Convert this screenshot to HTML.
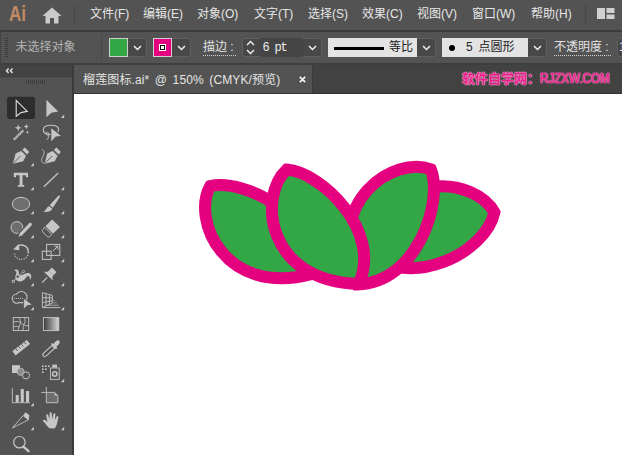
<!DOCTYPE html>
<html lang="zh-CN">
<head>
<meta charset="utf-8">
<title>榴莲图标.ai</title>
<style>
*{margin:0;padding:0;box-sizing:border-box}
html,body{width:622px;height:455px;overflow:hidden;background:#535353}
body{position:relative;font-family:"Liberation Sans","Noto Sans CJK SC",sans-serif;font-size:12px;color:#dcdcdc}
.abs{position:absolute}
#menubar{left:0;top:0;width:622px;height:30px;background:#535353}
#menubar .mi{position:absolute;top:5.4px;height:18px;line-height:18px;font-size:12px;color:#e6e6e6;white-space:nowrap}
#ctrl{left:0;top:30px;width:622px;height:35px;background:#535353;border-top:2px solid #3c3c3c;border-bottom:2px solid #3e3e3e}
#tabbar{left:73px;top:65px;width:549px;height:29px;background:#424242}
#tab{left:0;top:0;width:240px;height:28px;background:#535353}
#tools{left:0;top:65px;width:73.5px;height:390px;background:#535353;border-right:2px solid #3a3a3a}
#canvas{left:74px;top:94px;width:548px;height:361px;background:#fff}
.lbl{position:absolute;white-space:nowrap;line-height:16px;height:16px}

.dd{width:19px;height:19px;background:#484848;border:1px solid #5f5f5f;border-left:none;border-radius:0 3px 3px 0}
.spin{width:18px;height:19px;background:#484848;border:1px solid #5f5f5f;border-right:none;border-radius:3px 0 0 3px}
.inp{height:19px;background:#454545}
.lite{height:19px;background:#e3e3e3}
.ul{border-bottom:1px dotted #d0d0d0;height:16.4px}
.mono{font-family:"Liberation Mono",monospace;font-size:12px;letter-spacing:-1.2px;color:#eee}
.grip{background:repeating-linear-gradient(to bottom,#3c3c3c 0,#3c3c3c 1px,transparent 1px,transparent 2px)}
</style>
</head>
<body>
<div id="menubar" class="abs">
  <div class="abs" style="left:9px;top:0.5px;font-size:22.5px;font-weight:bold;color:#c28b66;line-height:26px;transform:scaleX(0.76);transform-origin:0 50%">Ai</div>
  <svg class="abs" style="left:42px;top:7px" width="20" height="17" viewBox="0 0 20 17"><path d="M10 0.5 L0.5 9 H3.5 V16.5 H8 V11 H12 V16.5 H16.5 V9 H19.5 Z" fill="#cbcbcb"/></svg>
  <div class="abs" style="left:73.5px;top:5px;width:1px;height:20px;background:#474747"></div>
  <div class="mi" style="left:90px">文件(F)</div>
  <div class="mi" style="left:143px">编辑(E)</div>
  <div class="mi" style="left:197px">对象(O)</div>
  <div class="mi" style="left:254px">文字(T)</div>
  <div class="mi" style="left:308px">选择(S)</div>
  <div class="mi" style="left:362px">效果(C)</div>
  <div class="mi" style="left:417px">视图(V)</div>
  <div class="mi" style="left:472px">窗口(W)</div>
  <div class="mi" style="left:531px">帮助(H)</div>
  <div class="abs" style="left:585px;top:5px;width:1px;height:20px;background:#474747"></div>
  <svg class="abs" style="left:597px;top:8px" width="18" height="12" viewBox="0 0 18 12"><rect x="0" y="0" width="8" height="11" fill="#d0d0d0"/><rect x="9.5" y="0" width="8" height="5" fill="#d0d0d0"/><rect x="9.5" y="6.5" width="8" height="4.5" fill="#d0d0d0"/></svg>
</div>

<div id="ctrl" class="abs"></div>
<div id="ctrlitems" class="abs" style="left:0;top:32px;width:622px;height:31px;overflow:hidden">
  <div class="abs grip" style="left:5px;top:6px;width:3px;height:19px"></div>
  <div class="lbl" style="left:15.5px;top:6.5px;color:#b4b4b4">未选择对象</div>
  <div class="abs" style="left:101px;top:3px;width:1px;height:25px;background:#484848"></div>
  <div class="abs" style="left:109px;top:6px;width:19px;height:19px;background:#33a646;border:1px solid #cfcfcf"></div>
  <div class="abs dd" style="left:128px;top:6px"></div><svg class="abs" style="left:133px;top:13px" width="9" height="6" viewBox="0 0 9 6"><path d="M1 1 L4.5 4.5 L8 1" fill="none" stroke="#f0f0f0" stroke-width="1.5"/></svg>
  <div class="abs" style="left:153px;top:6px;width:19px;height:19px;background:#e4007f;border:1px solid #cfcfcf"></div>
  <div class="abs" style="left:159px;top:12px;width:7px;height:7px;background:#fff;border:1px solid #fff"><div style="width:5px;height:5px;background:#fff;border:1.5px solid #111"></div></div>
  <div class="abs dd" style="left:172px;top:6px"></div><svg class="abs" style="left:177px;top:13px" width="9" height="6" viewBox="0 0 9 6"><path d="M1 1 L4.5 4.5 L8 1" fill="none" stroke="#f0f0f0" stroke-width="1.5"/></svg>
  <div class="lbl ul" style="left:203px;top:7.3px;color:#e2e2e2;width:33px">描边 :</div>
  <div class="abs spin" style="left:241.5px;top:6px;width:18.5px"></div>
  <svg class="abs" style="left:246px;top:8px" width="9" height="15" viewBox="0 0 9 15"><path d="M1 5 L4.5 1.5 L8 5 M1 10 L4.5 13.5 L8 10" fill="none" stroke="#f0f0f0" stroke-width="1.4"/></svg>
  <div class="abs inp" style="left:260px;top:6px;width:44px"></div>
  <div class="lbl mono" style="left:262.5px;top:7.5px">6 pt</div>
  <div class="abs dd" style="left:303px;top:6px"></div><svg class="abs" style="left:308px;top:13px" width="9" height="6" viewBox="0 0 9 6"><path d="M1 1 L4.5 4.5 L8 1" fill="none" stroke="#f0f0f0" stroke-width="1.5"/></svg>
  <div class="abs lite" style="left:328px;top:6px;width:89px"></div>
  <div class="abs" style="left:334px;top:14.5px;width:50px;height:3.5px;background:#000"></div>
  <div class="lbl" style="left:389px;top:6.5px;color:#222">等比</div>
  <div class="abs dd" style="left:417px;top:6px"></div><svg class="abs" style="left:422px;top:13px" width="9" height="6" viewBox="0 0 9 6"><path d="M1 1 L4.5 4.5 L8 1" fill="none" stroke="#f0f0f0" stroke-width="1.5"/></svg>
  <div class="abs lite" style="left:442px;top:6px;width:86px"></div>
  <div class="abs" style="left:448.5px;top:12.5px;width:6px;height:6px;border-radius:50%;background:#000"></div>
  <div class="lbl" style="left:466px;top:6.5px;color:#222">5</div>
  <div class="lbl" style="left:478.5px;top:6.5px;color:#222">点圆形</div>
  <div class="abs dd" style="left:528px;top:6px"></div><svg class="abs" style="left:533px;top:13px" width="9" height="6" viewBox="0 0 9 6"><path d="M1 1 L4.5 4.5 L8 1" fill="none" stroke="#f0f0f0" stroke-width="1.5"/></svg>
  <div class="lbl ul" style="left:554px;top:7.3px;color:#e2e2e2;width:57px">不透明度 :</div>
  <div class="abs inp" style="left:617px;top:6px;width:10px;border-radius:3px 0 0 3px;border:1px solid #5e5e5e"></div>
  <div class="lbl" style="left:619px;top:6.5px;color:#eee">100%</div>
</div>

<div class="abs" style="left:0;top:31px;width:1px;height:424px;background:#434343"></div>
<div id="tabbar" class="abs">
  <div id="tab" class="abs">
    <div class="lbl" id="tabtxt" style="left:10px;top:7px;color:#e4e4e4;word-spacing:2px;letter-spacing:0.13px">榴莲图标.ai* @ 150% (CMYK/预览)</div>
    <svg class="abs" style="left:225.5px;top:11px" width="7" height="7" viewBox="0 0 7 7"><path d="M0.8 0.8 L6.2 6.2 M6.2 0.8 L0.8 6.2" stroke="#f2f2f2" stroke-width="1.7"/></svg>
  </div>
  <div class="abs" style="left:239px;top:0;width:1px;height:28px;background:#3c3c3c"></div>
  <div class="abs" style="left:0;top:28px;width:549px;height:1px;background:#333"></div>
  <div class="lbl" id="wm" style="left:389px;top:5px;color:#e6208a;font-weight:bold;font-size:13px;text-shadow:0 0 1.5px #ffa8d2,0 0 1px #ffb8da,0 0 1px #ffb8da">软件自学网：<span style="display:inline-block;font-size:14px;font-weight:normal;-webkit-text-stroke:0.45px #e6208a;transform:scaleX(0.83);transform-origin:0 50%;letter-spacing:0">RJZXW.COM</span></div>
</div>

<div id="tools" class="abs">
<svg class="abs" style="left:0;top:0" width="73" height="390" viewBox="0 65 73 390">
 <defs>
  <linearGradient id="gr" x1="0" x2="1" y1="0" y2="0"><stop offset="0" stop-color="#3a3a3a"/><stop offset="1" stop-color="#d8d8d8"/></linearGradient>
 </defs>
 <!-- header -->
 <rect x="0" y="64.5" width="72" height="12" fill="#434343"/>
 <rect x="0" y="76.3" width="72" height="1" fill="#3c3c3c"/>
 <path d="M8.6 68.5 L6.5 70.8 L8.6 73.1 M12.5 68.5 L10.4 70.8 L12.5 73.1" fill="none" stroke="#e0e0e0" stroke-width="1.5"/>
 <g stroke="#3e3e3e" stroke-width="1"><path d="M26.5 80.3V84M28.5 80.3V84M30.5 80.3V84M32.5 80.3V84M34.5 80.3V84M36.5 80.3V84M38.5 80.3V84M40.5 80.3V84M42.5 80.3V84M44.5 80.3V84"/></g>
 <!-- selected bg -->
 <rect x="7" y="96.8" width="28" height="22.2" rx="2.5" fill="#2d2d2d"/>
 <g fill="#c6c6c6">
  <!-- corner triangles -->
  <path d="M64.2 114.6V118H60.9Z"/>
  <path d="M33.9 162.8V166.2H30.6Z"/>
  <path d="M33.9 186.8V190.2H30.6Z"/><path d="M64.2 186.8V190.2H60.9Z"/>
  <path d="M33.9 210.8V214.2H30.6Z"/><path d="M64.2 210.8V214.2H60.9Z"/>
  <path d="M33.9 234.8V238.2H30.6Z"/><path d="M64.2 234.8V238.2H60.9Z"/>
  <path d="M33.9 258.8V262.2H30.6Z"/><path d="M64.2 258.8V262.2H60.9Z"/>
  <path d="M33.9 282.8V286.2H30.6Z"/><path d="M64.2 282.8V286.2H60.9Z"/>
  <path d="M33.9 306.8V310.2H30.6Z"/><path d="M64.2 306.8V310.2H60.9Z"/>
  <path d="M64.2 378.8V382.2H60.9Z"/>
  <path d="M33.9 402.8V406.2H30.6Z"/>
  <path d="M33.9 426.8V430.2H30.6Z"/><path d="M64.2 426.8V430.2H60.9Z"/>
 </g>
 <!-- row1: selection, direct selection -->
 <path d="M16.2 100.3 L27.2 111.3 L21 112.6 L16.2 116.3 Z" fill="#2d2d2d" stroke="#dcdcdc" stroke-width="1.1" stroke-linejoin="miter"/>
 <path d="M46.4 99.8 L58.2 111.6 L51.4 112.8 L46.4 117.2 Z" fill="#c6c6c6"/>
 <!-- row2: magic wand, lasso -->
 <g>
  <path d="M13.8 139.8 L23.2 130.4" stroke="#c6c6c6" stroke-width="2.3" stroke-dasharray="1.6 0.4"/>
  <path d="M18.2 124.2 L19.1 126.9 L21.8 127.8 L19.1 128.7 L18.2 131.4 L17.3 128.7 L14.6 127.8 L17.3 126.9 Z" fill="#c6c6c6"/>
  <path d="M26.3 123.8 L27 125.8 L29 126.5 L27 127.2 L26.3 129.2 L25.6 127.2 L23.6 126.5 L25.6 125.8 Z" fill="#c6c6c6"/>
  <path d="M27.4 130.4 L27.9 131.7 L29.2 132.2 L27.9 132.7 L27.4 134 L26.9 132.7 L25.6 132.2 L26.9 131.7 Z" fill="#c6c6c6"/>
 </g>
 <g>
  <path d="M50.5 134.6 C45.5 134.6 43.3 132.2 43.3 129.8 C43.3 126.8 46.6 125.2 51 125.2 C55.6 125.2 58.6 127 58.6 129.6 C58.6 130.4 58.3 131.2 57.6 131.8" fill="none" stroke="#c6c6c6" stroke-width="1.1"/>
  <circle cx="47.3" cy="133.6" r="1.3" fill="none" stroke="#c6c6c6" stroke-width="0.9"/>
  <path d="M48.2 134.6 C48.8 136.6 48.4 138.6 46.8 139.8" fill="none" stroke="#c6c6c6" stroke-width="0.9"/>
  <path d="M51.3 128.2 L61 136 L55.6 136.6 L51.3 141.2 Z" fill="#c6c6c6"/>
 </g>
 <!-- row3: pen, curvature -->
 <g fill="#c6c6c6">
  <path d="M12.9 163.7 L15.6 153.6 L21.2 150.9 L26 155.7 L23.2 161.2 Z"/>
  <path d="M22.3 149.8 L24.9 147.6 L29.2 151.9 L27 154.6 Z"/>
  <path d="M13.4 163.2 L20.5 156.1" stroke="#535353" stroke-width="0.9"/>
  <path d="M44.5 163.7 L47.2 153.6 L52.8 150.9 L57.6 155.7 L54.8 161.2 Z"/>
  <path d="M53.9 149.8 L56.5 147.6 L60.8 151.9 L58.6 154.6 Z"/>
  <path d="M45 163.2 L52.1 156.1" stroke="#535353" stroke-width="0.9"/>
  <path d="M42.2 149.3 C45.8 152.3 43.6 155 42.2 157.8 C41 160.4 41.6 162.6 44.3 163.4" fill="none" stroke="#c6c6c6" stroke-width="0.9"/>
 </g>
 <!-- row4: type, line -->
 <path d="M13.8 172.8 H28 V177.2 H25.9 V175.2 H22.5 V184.9 H24.2 V186.8 H17.9 V184.9 H19.6 V175.2 H16 V177.2 H13.8 Z" fill="#c6c6c6"/>
 <path d="M43.9 186.8 L58.2 173" stroke="#c6c6c6" stroke-width="1.3"/>
 <!-- row5: ellipse, paintbrush -->
 <ellipse cx="21" cy="204" rx="8.7" ry="6.7" fill="#6e6e6e" stroke="#d0d0d0" stroke-width="0.9"/>
 <path d="M58.6 195.6 C59.6 195.2 60.3 196 59.8 197 L52.9 207.7 L49.6 205.3 Z M48.9 206.3 L52.2 208.6 C51.6 211.7 47.6 212.3 43.2 212 C46 211 46.2 207.4 48.9 206.3 Z" fill="#c6c6c6"/>
 <!-- row6: shaper, eraser -->
 <circle cx="16.9" cy="227.5" r="5.9" fill="#6e6e6e" stroke="#d0d0d0" stroke-width="0.9"/>
 <path d="M30.4 224.2 L19.6 235.6" stroke="#535353" stroke-width="5.4" stroke-linecap="round"/><path d="M30.3 224.3 L21.6 233.5" stroke="#c6c6c6" stroke-width="3.2" stroke-linecap="round"/><path d="M20.1 232.4 L22.9 234.9 L18.5 236.7 Z" fill="#c6c6c6"/>
 <path d="M52.1 219.5 L60 227 L53 233.8 L45.4 226.2 Z" fill="#c6c6c6"/>
 <path d="M44.6 227.2 L51.8 234.6 L49.6 236.6 C48.8 237.3 48 237.3 47.2 236.6 L42.8 232 C42.2 231.2 42.2 230.4 42.9 229.7 Z" fill="none" stroke="#c6c6c6" stroke-width="0.9"/>
 <!-- row7: rotate, scale -->
 <g fill="none" stroke="#c6c6c6">
  <path d="M17.2 246.4 A7 7 0 0 1 28.3 252.6" stroke-width="1.4"/>
  <path d="M28.3 252.6 A7 7 0 0 1 14.4 253.6" stroke-width="1.4" stroke-dasharray="1 1.4"/>
  <path d="M13.2 249.6 L18.8 244 L19.4 250.2 Z" fill="#c6c6c6" stroke="none"/>
  <rect x="46.6" y="244.4" width="13.2" height="11" stroke-width="1"/>
  <rect x="42.3" y="251.2" width="8.8" height="8.2" stroke-width="1"/>
  <path d="M53 251 L57.6 246.4 M54.6 246.2 H57.9 V249.5" stroke-width="1"/>
 </g>
 <!-- row8: width, pin -->
 <g>
  <path d="M14.2 271 C15 269.2 17.8 269 18.6 271.2 C19.2 273 18.6 274.4 19.6 275.6 C21.4 275.4 23.6 274.6 25.4 273.6 C27.6 272.4 30.2 272.6 31 275 C31.6 277 31 278.8 29.8 280 C30 277.6 29.6 276 28.2 276 C26.8 276 26.2 277.6 25 279 C23 281.4 19.6 282 17.4 280.8 C15 279.4 15.2 276.8 16 274.8 C16.6 273.2 16.6 271.6 15.6 271 C15 270.8 14.6 271 14.2 271 Z" fill="#c6c6c6"/>
  <path d="M13.4 281 L23.4 271.6" stroke="#c6c6c6" stroke-width="0.9"/>
  <circle cx="17.7" cy="276.6" r="1.7" fill="#535353" stroke="#c6c6c6" stroke-width="0.8"/>
  <rect x="12.2" y="280.4" width="2.2" height="2.2" fill="#535353" stroke="#c6c6c6" stroke-width="0.7"/>
  <circle cx="23.6" cy="271.4" r="1.1" fill="#535353" stroke="#c6c6c6" stroke-width="0.7"/>
 </g>
 <g fill="#c6c6c6">
  <path d="M51.9 267.6 L56.5 272.2 L53.4 275.3 L48.8 270.7 Z"/>
  <path d="M48.8 270.7 L53.4 275.3 L52.3 277.2 L52.8 280.6 L43.6 271.4 L47 271.9 Z"/>
  <path d="M47.2 277.4 L42.1 282.7" stroke="#c6c6c6" stroke-width="1.2"/>
 </g>
 <!-- row9: shape builder, perspective grid -->
 <g>
  <circle cx="16.9" cy="298.6" r="5.2" fill="#c6c6c6"/>
  <circle cx="21.4" cy="297.2" r="6.2" fill="#c6c6c6"/>
  <circle cx="16.9" cy="298.6" r="4.1" fill="#535353"/>
  <circle cx="21.4" cy="297.2" r="5.1" fill="#535353"/>
  <path d="M14.2 298.4 H23.5" stroke="#c6c6c6" stroke-width="1" stroke-dasharray="1 0.9" fill="none"/>
  <path d="M23.6 298.2 L32.4 304.8 L27.4 305.6 L23.6 309.2 Z" fill="#c6c6c6" stroke="#535353" stroke-width="0.8"/>
 </g>
 <g fill="none" stroke="#c6c6c6" stroke-width="0.9">
  <path d="M42.4 292.6 L52.4 295.4 V303 L42.4 307.6 Z M46 293.6 V306 M49.4 294.6 V304.4 M42.4 297.6 L52.4 298 M42.4 302.6 L52.4 300.6"/>
  <path d="M43 307.6 H60.4" stroke="#c6c6c6"/>
  <path d="M47 305.2 H58.6" stroke="#b0b0b0"/>
  <path d="M51 302.8 H56.8" stroke="#9a9a9a"/>
  <path d="M52.6 300.6 H55" stroke="#8a8a8a"/>
 </g>
 <!-- row10: mesh, gradient -->
 <g fill="none" stroke="#c6c6c6" stroke-width="0.9">
  <rect x="13.3" y="317.6" width="15.4" height="13"/>
  <path d="M13.3 322.4 C17 320.6 20 321.6 22.6 324 C24.6 325.8 26.6 326.2 28.7 325.4 M18.8 317.6 C20.6 320 21 322.6 19.6 325.6 C18.8 327.4 18.2 329 18.4 330.6 M24.4 317.6 C25.8 320.4 25 322.6 23.8 325 C23 326.8 22.8 328.8 23.4 330.6 M13.3 327.2 C15.4 325.8 17.4 326 19 327"/>
 </g>
 <rect x="43.4" y="317.6" width="15.4" height="13" fill="url(#gr)" stroke="#c6c6c6" stroke-width="0.9"/>
 <!-- row11: measure, eyedropper -->
 <g>
  <path d="M12.8 351.2 L26.8 340.4 L29.6 344 L15.6 355 Z" fill="#c6c6c6" stroke="#c6c6c6" stroke-width="0.8" stroke-linejoin="round"/>
  <path d="M16 348.8 L17.5 350.7 M18.8 346.6 L20.3 348.5 M21.6 344.5 L23.1 346.4 M24.4 342.3 L25.9 344.2" stroke="#535353" stroke-width="1"/>
 </g>
 <g>
  <path d="M52 345.6 L54.6 348.2 L46.6 355.6 C45.4 356.6 44 356.8 43.3 356 C42.6 355.2 42.8 353.8 43.8 352.8 Z" fill="none" stroke="#c6c6c6" stroke-width="1.1"/>
  <path d="M50.8 344 L56 349.2 L57.4 347.8 L56.2 346.6 C58.4 345.2 60 343.4 59.7 341.5 C59.4 340 57.8 339.8 56.4 340.7 C55.1 341.6 54.1 343.1 53.4 344.2 L52.3 343 Z" fill="#c6c6c6"/>
 </g>
 <!-- row12: blend, symbol sprayer -->
 <g>
  <rect x="12" y="365.2" width="8" height="7.8" fill="#c6c6c6"/>
  <circle cx="20.6" cy="371.8" r="3.6" fill="#8a8a8a" stroke="#c6c6c6" stroke-width="0.7"/>
  <circle cx="26" cy="375.4" r="3.5" fill="#535353" stroke="#d0d0d0" stroke-width="0.9"/>
 </g>
 <g fill="#c6c6c6">
  <rect x="42" y="365.4" width="1.6" height="1.6"/><rect x="45" y="365.4" width="1.6" height="1.6"/><rect x="48" y="365.4" width="1.6" height="1.6"/>
  <rect x="42" y="368.4" width="1.6" height="1.6"/><rect x="45" y="368.4" width="1.6" height="1.6"/>
  <rect x="42" y="371.4" width="1.6" height="1.6"/>
  <rect x="52.2" y="364.6" width="4.8" height="3"/>
  <rect x="50.4" y="368" width="8.8" height="11.4" fill="none" stroke="#c6c6c6" stroke-width="0.9"/>
  <circle cx="54.8" cy="374" r="2.2" fill="none" stroke="#c6c6c6" stroke-width="1.5"/>
 </g>
 <!-- row13: graph, artboard -->
 <g fill="#c6c6c6">
  <path d="M12.3 388.2 V402.7 H29.9" fill="none" stroke="#c6c6c6" stroke-width="0.9"/>
  <rect x="15.7" y="395" width="3.1" height="7.3"/>
  <rect x="20.7" y="389" width="3.1" height="13.3"/>
  <rect x="26" y="391" width="3.1" height="11.3"/>
 </g>
 <g fill="none" stroke="#c6c6c6" stroke-width="0.9">
  <path d="M46.3 386.9 V392.4 M41.2 392.4 H46.3"/>
  <path d="M46.3 392.4 H54.6 L57.9 395.6 V402.7 H46.3 Z" fill="#6e6e6e"/>
  <path d="M54.6 392.4 V395.6 H57.9 Z" fill="#c6c6c6" stroke="none"/>
 </g>
 <!-- row14: slice, hand -->
 <g>
  <path d="M12.4 427.9 L23.2 415.6 L28.4 419.8 L16.6 425.8 Z" fill="none" stroke="#c6c6c6" stroke-width="0.9"/>
  <path d="M23.2 415.2 L25.6 412.2 L29.4 415.2 L28.6 420.2 Z" fill="#c6c6c6"/>
 </g>
 <path d="M49.6 428.2 C47.6 427 45.6 423.4 43 421.2 C42.6 420.2 43.8 419.4 45 420 L47.4 422 L46.2 415.4 C46 414 47.8 413.8 48.2 415 L49.4 419.4 L49.6 413.4 C49.6 412 51.6 412 51.8 413.4 L52.2 419.2 L53.4 414 C53.8 412.8 55.6 413.2 55.4 414.6 L54.8 420 L56.6 416.8 C57.2 415.8 58.8 416.4 58.4 417.6 C57.6 420.6 57.4 423 56.4 425.4 C55.8 427 54.8 428.2 54.2 428.4 Z" fill="#c6c6c6"/>
 <!-- row15: zoom -->
 <circle cx="19.4" cy="442.2" r="5.7" fill="none" stroke="#c6c6c6" stroke-width="1.2"/>
 <path d="M23.6 446.8 L28.6 451.2" stroke="#c6c6c6" stroke-width="2.4" stroke-linecap="round"/>
</svg>
</div>

<div id="canvas" class="abs">
<svg class="abs" style="left:0;top:0" width="548" height="361" viewBox="74 94 548 361">
 <g fill="#33a646" stroke="#e4007f" stroke-width="12" stroke-linejoin="miter" stroke-miterlimit="10">
  <path id="leaf4" d="M494.4 212.3 C476.2 178.3 391.4 165.0 364.8 251.4 C410 291.5 486 252.5 494.4 212.3 Z"/>
  <path id="leaf3" d="M430.8 169.3 C395.3 155.3 322.8 199.4 357.6 284.4 C416.2 283.2 443.8 202.3 430.8 169.3 Z"/>
  <path id="leaf1" d="M210.2 186.2 C191.3 219.4 224.6 297.4 311.9 274.0 C320.4 217.0 244.8 178.1 210.2 186.2 Z"/>
  <path id="leaf2" d="M286.7 169.6 C258.0 196.0 265.8 281.6 358.7 284.0 C382.8 231.6 321.7 172.2 286.7 169.6 Z"/>
 </g>
</svg>
</div>
</body>
</html>
